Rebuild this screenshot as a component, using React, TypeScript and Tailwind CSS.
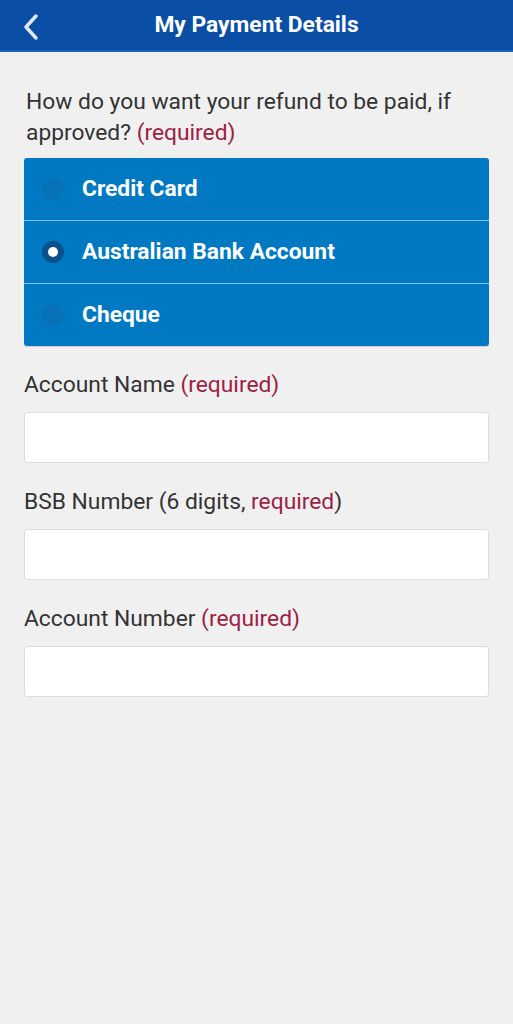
import { useState } from "react";

const options = ["Credit Card", "Australian Bank Account", "Cheque"];

const fields = [
  { label: "Account Name", note: "(required)", pre: " " },
  { label: "BSB Number (6 digits,", note: "required", post: ")", pre: " " },
  { label: "Account Number", note: "(required)", pre: " " },
];

export default function App() {
  const [method, setMethod] = useState("Australian Bank Account");

  return (
    <div className="min-h-[1024px] w-full bg-[#f0f0f0] font-['Roboto',sans-serif]">
      <header className="relative flex h-[52px] items-center justify-center border-b-2 border-[#1b63b8] bg-[#0a4ea6]">
        <button className="absolute left-[18px] top-[9px] p-1" aria-label="Back">
          <svg width="18" height="28" viewBox="0 0 18 28" fill="none">
            <path
              d="M14 3 L4 14 L14 25"
              stroke="#dfe9f6"
              strokeWidth="3.5"
              strokeLinecap="round"
              strokeLinejoin="round"
            />
          </svg>
        </button>
        <h1 className="text-[22.8px] font-bold text-white">My Payment Details</h1>
      </header>

      <main className="px-[24px] pt-[34px]">
        <p className="px-[2px] text-[22.8px] leading-[31px] text-[#333333]">
          How do you want your refund to be paid, if approved?{" "}
          <span className="text-[#9b2244]">(required)</span>
        </p>

        <div className="mt-[10px] overflow-hidden rounded-[3px] bg-[#0079c2] shadow-[0_1px_1px_rgba(0,0,0,0.15)]">
          {options.map((opt, i) => {
            const selected = method === opt;
            return (
              <button
                key={opt}
                onClick={() => setMethod(opt)}
                className={`flex w-full items-center text-left ${
                  i > 0 ? "h-[63px] border-t border-[#7fbde6]" : "h-[62px]"
                }`}
              >
                <span className="ml-[18px] flex h-[22px] w-[22px] items-center justify-center">
                  {selected ? (
                    <span className="flex h-[22px] w-[22px] items-center justify-center rounded-full bg-[#0b4f8d]">
                      <span className="h-[10px] w-[10px] rounded-full bg-white" />
                    </span>
                  ) : (
                    <span className="h-[22px] w-[22px] rounded-full bg-[#0772b8]" />
                  )}
                </span>
                <span className="ml-[18px] text-[22.8px] font-bold text-white">{opt}</span>
              </button>
            );
          })}
        </div>

        {fields.map((f) => (
          <div key={f.label} className="mt-[25px]">
            <label className="block text-[22.8px] leading-[28px] text-[#333333]">
              {f.label}
              {f.pre}
              <span className="text-[#9b2244]">{f.note}</span>
              {f.post}
            </label>
            <input
              type="text"
              className="mt-[13px] block h-[51px] w-full rounded-[3px] border border-[#dcdcdc] bg-white px-3 text-[18px] outline-none"
            />
          </div>
        ))}
      </main>
    </div>
  );
}
